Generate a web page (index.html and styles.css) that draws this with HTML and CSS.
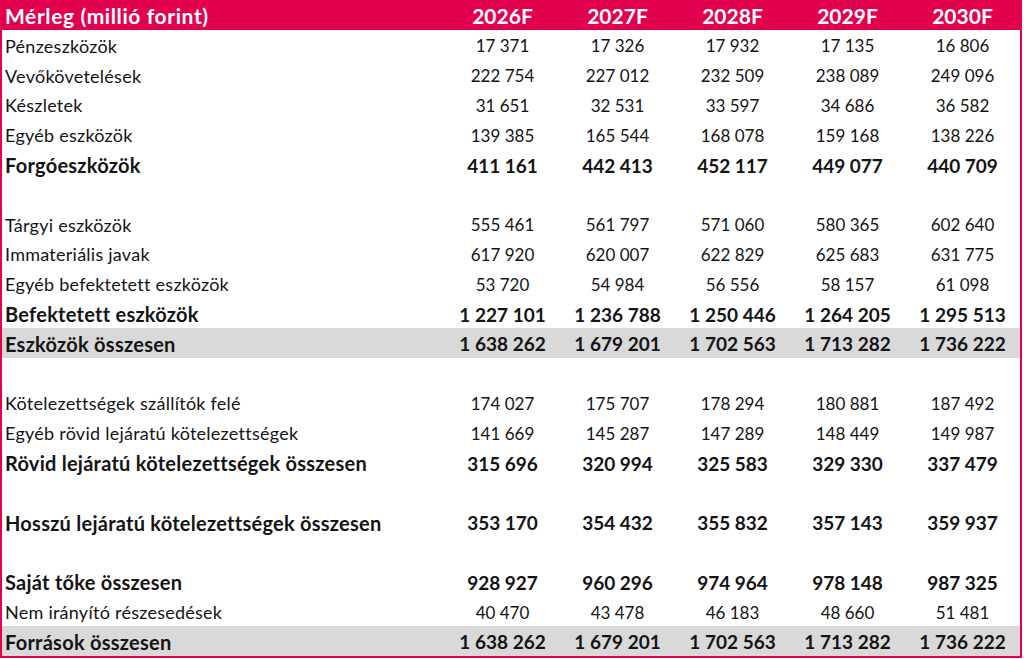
FILE: index.html
```html
<!DOCTYPE html>
<html lang="hu">
<head>
<meta charset="utf-8">
<title>Mérleg</title>
<link rel="stylesheet" href="styles.css">
</head>
<body>
<div class="sheet">
  <div class="row head"><div class="label">Mérleg (millió forint)</div><div>2026F</div><div>2027F</div><div>2028F</div><div>2029F</div><div>2030F</div></div>
  <div class="row"><div class="label">Pénzeszközök</div><div>17 371</div><div>17 326</div><div>17 932</div><div>17 135</div><div>16 806</div></div>
  <div class="row"><div class="label">Vevőkövetelések</div><div>222 754</div><div>227 012</div><div>232 509</div><div>238 089</div><div>249 096</div></div>
  <div class="row"><div class="label">Készletek</div><div>31 651</div><div>32 531</div><div>33 597</div><div>34 686</div><div>36 582</div></div>
  <div class="row"><div class="label">Egyéb eszközök</div><div>139 385</div><div>165 544</div><div>168 078</div><div>159 168</div><div>138 226</div></div>
  <div class="row bold"><div class="label">Forgóeszközök</div><div>411 161</div><div>442 413</div><div>452 117</div><div>449 077</div><div>440 709</div></div>
  <div class="row"></div>
  <div class="row"><div class="label">Tárgyi eszközök</div><div>555 461</div><div>561 797</div><div>571 060</div><div>580 365</div><div>602 640</div></div>
  <div class="row"><div class="label">Immateriális javak</div><div>617 920</div><div>620 007</div><div>622 829</div><div>625 683</div><div>631 775</div></div>
  <div class="row"><div class="label">Egyéb befektetett eszközök</div><div>53 720</div><div>54 984</div><div>56 556</div><div>58 157</div><div>61 098</div></div>
  <div class="row bold"><div class="label">Befektetett eszközök</div><div>1 227 101</div><div>1 236 788</div><div>1 250 446</div><div>1 264 205</div><div>1 295 513</div></div>
  <div class="row bold total"><div class="label">Eszközök összesen</div><div>1 638 262</div><div>1 679 201</div><div>1 702 563</div><div>1 713 282</div><div>1 736 222</div></div>
  <div class="row"></div>
  <div class="row"><div class="label">Kötelezettségek szállítók felé</div><div>174 027</div><div>175 707</div><div>178 294</div><div>180 881</div><div>187 492</div></div>
  <div class="row"><div class="label">Egyéb rövid lejáratú kötelezettségek</div><div>141 669</div><div>145 287</div><div>147 289</div><div>148 449</div><div>149 987</div></div>
  <div class="row bold"><div class="label">Rövid lejáratú kötelezettségek összesen</div><div>315 696</div><div>320 994</div><div>325 583</div><div>329 330</div><div>337 479</div></div>
  <div class="row"></div>
  <div class="row bold"><div class="label">Hosszú lejáratú kötelezettségek összesen</div><div>353 170</div><div>354 432</div><div>355 832</div><div>357 143</div><div>359 937</div></div>
  <div class="row"></div>
  <div class="row bold"><div class="label">Saját tőke összesen</div><div>928 927</div><div>960 296</div><div>974 964</div><div>978 148</div><div>987 325</div></div>
  <div class="row"><div class="label">Nem irányító részesedések</div><div>40 470</div><div>43 478</div><div>46 183</div><div>48 660</div><div>51 481</div></div>
  <div class="row bold total"><div class="label">Források összesen</div><div>1 638 262</div><div>1 679 201</div><div>1 702 563</div><div>1 713 282</div><div>1 736 222</div></div>
</div>
</body>
</html>
```
FILE: styles.css
```css
html, body {
  margin: 0;
  padding: 0;
  background: #ffffff;
}
body {
  font-family: Lato, "Liberation Sans", sans-serif;
  color: #141414;
}
.sheet {
  width: 1018px;
  border: 2px solid #e3004f;
  border-top-width: 0;
  display: grid;
  grid-template-rows: 30px;
  grid-auto-rows: 29.8px;
}
.row {
  display: grid;
  grid-template-columns: 443px repeat(5, 115px);
  align-items: center;
  font-size: 17px;
  text-align: center;
  padding-top: 2px;
  line-height: 1;
}
.row .label {
  text-align: left;
  padding-left: 3px;
  white-space: nowrap;
  font-size: 18px;
  letter-spacing: 0.25px;
}
.head {
  background: #e3004f;
  color: #ffffff;
  font-weight: 700;
  font-size: 21px;
  padding-top: 0;
}
.head .label {
  font-size: 21px;
  letter-spacing: 0.6px;
}
.bold {
  font-weight: 700;
  font-size: 19px;
}
.bold .label {
  font-size: 20px;
  letter-spacing: 0.25px;
}
.total {
  background: #d9d9d9;
}
```
